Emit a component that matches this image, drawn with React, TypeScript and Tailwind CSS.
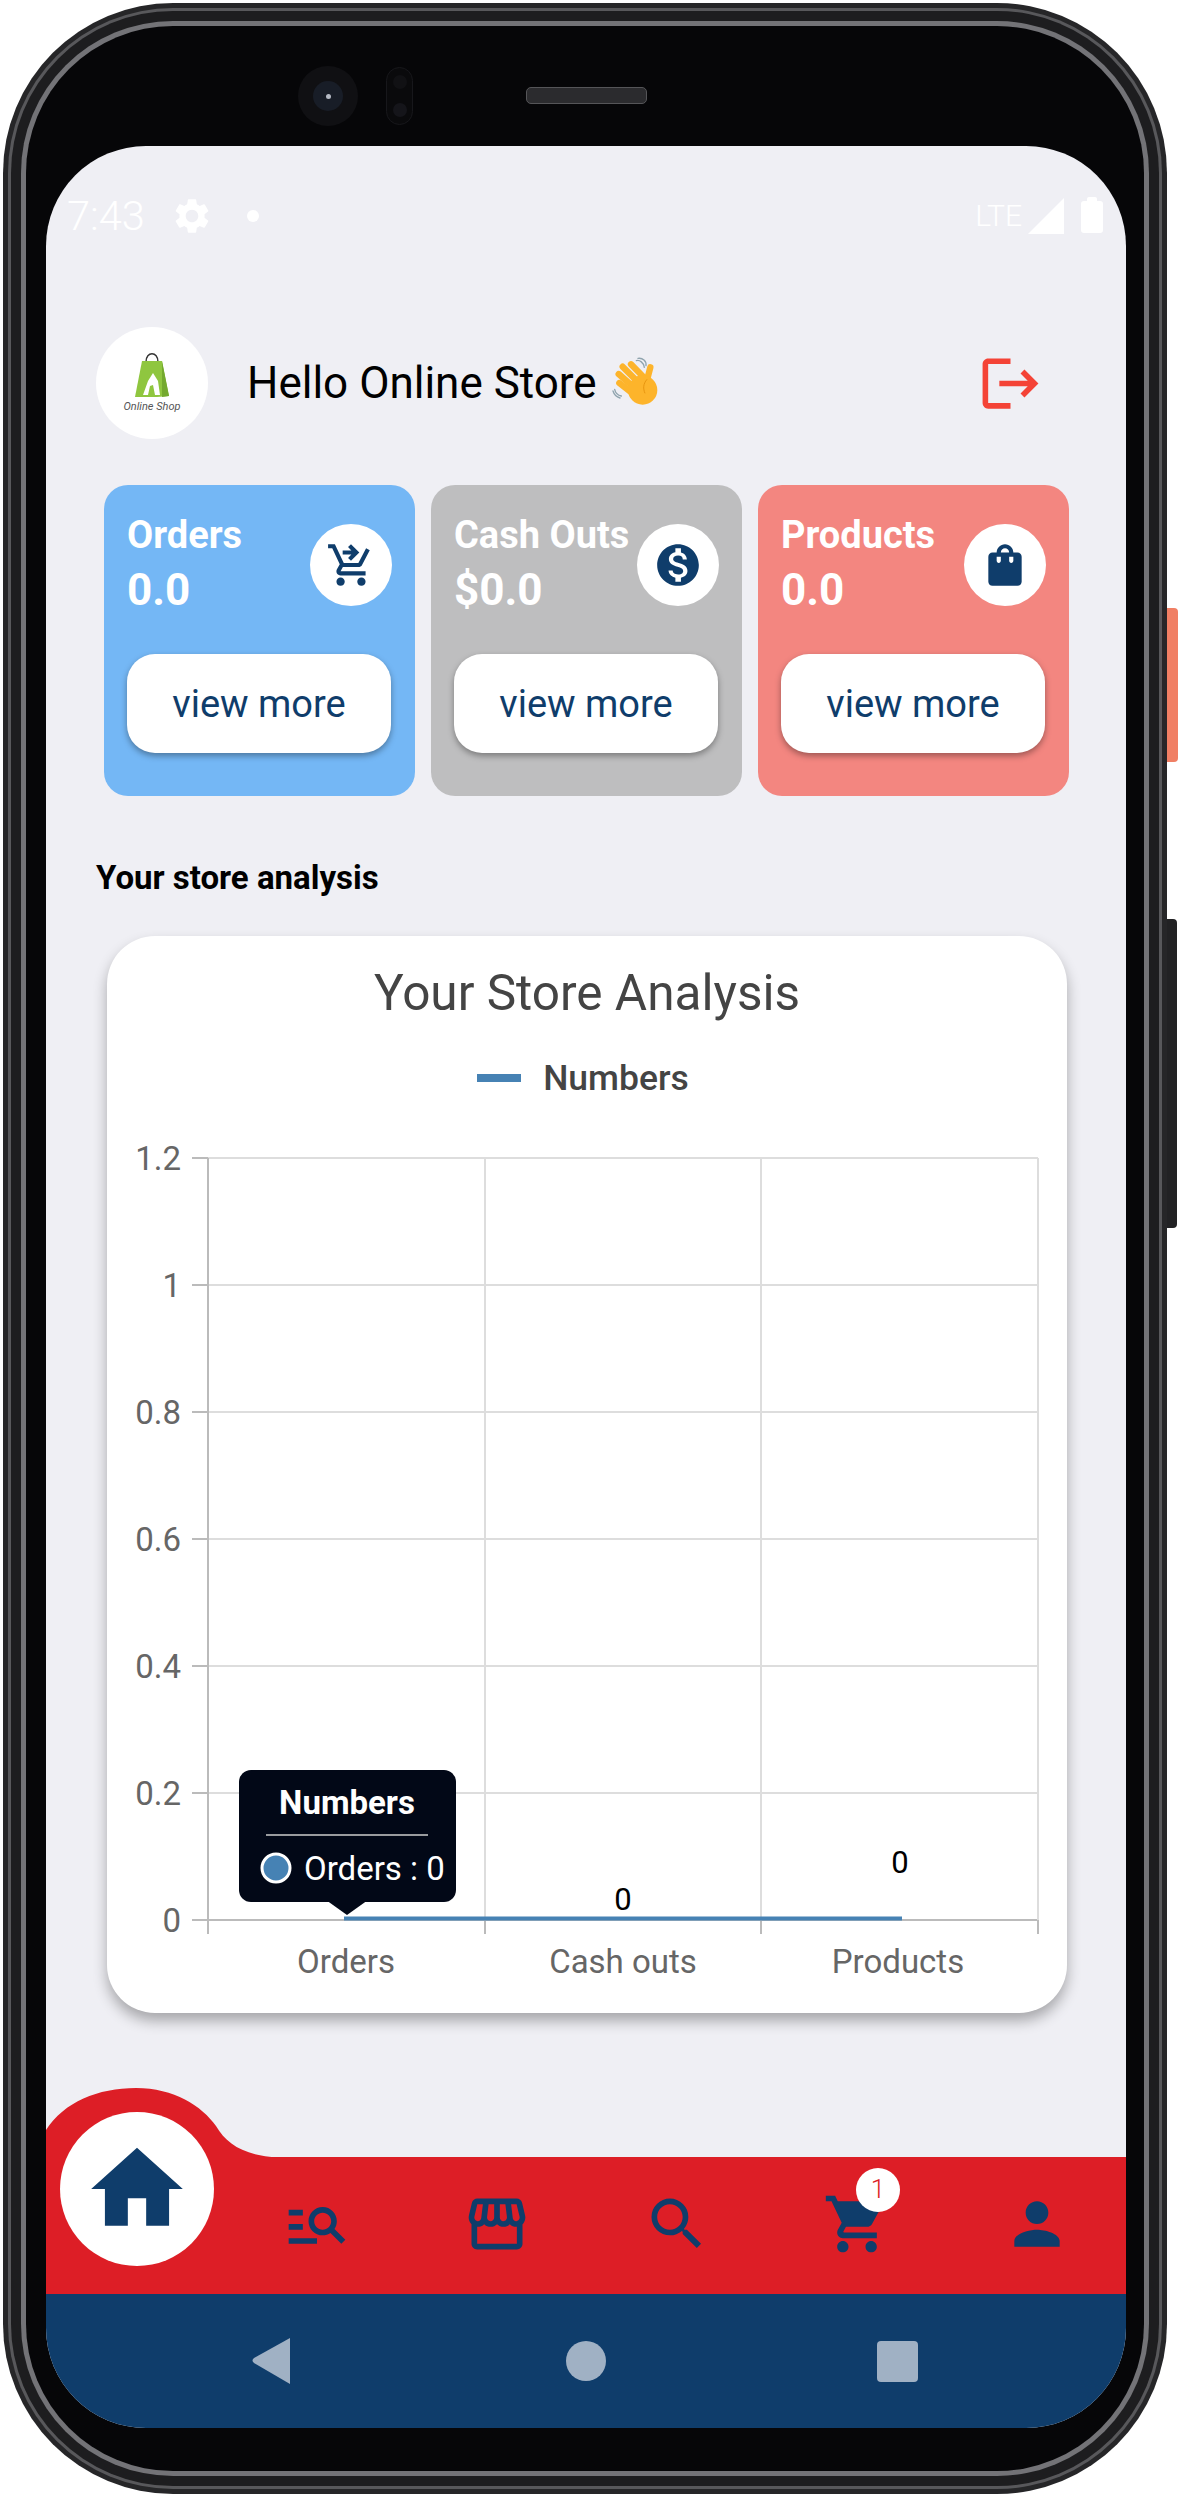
import type { ReactNode } from "react";
import { MdHome, MdLogout, MdManageSearch, MdMonetizationOn, MdOutlineStorefront, MdPerson, MdSearch, MdSettings, MdShoppingBag, MdShoppingCart, MdShoppingCartCheckout } from "react-icons/md";

const navy = "#0f3d6b";

function Frame({ children }: { children: ReactNode }) {
  return (
    <div className="relative h-[2498px] w-[1178px] overflow-hidden bg-white pl-[3px] pt-[3px]" style={{ fontFamily: "Roboto, sans-serif" }}>
      <div className="absolute right-0 top-[608px] h-[154px] w-[14px] rounded-r-[4px] bg-[#f07f64]" />
      <div className="absolute right-[1px] top-[919px] h-[309px] w-[14px] rounded-r-[4px] bg-[#222224]" />
      <div className="relative h-[2491px] w-[1164px] rounded-[170px] bg-[#262628] p-[5px]">
        <div className="h-full w-full rounded-[165px] bg-[#58585b] p-[3px]">
          <div className="h-full w-full rounded-[162px] bg-[#1d1d1f] p-[10px]">
            <div className="h-full w-full rounded-[152px] bg-[#737377] p-[5px]">
              <div className="flex h-full w-full flex-col rounded-[147px] bg-[#060608] pl-[20px] pr-[18px]">{children}</div>
            </div>
          </div>
        </div>
      </div>
    </div>
  );
}

function TopBezel() {
  return (
    <div className="flex h-[120px] shrink-0 items-center pl-[252px] pt-[20px]">
      <div className="flex h-[60px] w-[60px] items-center justify-center rounded-full bg-[#101013]">
        <div className="flex h-[30px] w-[30px] items-center justify-center rounded-full bg-[#181d27]">
          <div className="h-[5px] w-[5px] rounded-full bg-[#b5bac4]" />
        </div>
      </div>
      <div className="ml-[28px] flex h-[58px] w-[27px] flex-col items-center justify-around rounded-full border border-[#17171b] bg-[#0a0a0c]">
        <div className="h-[14px] w-[14px] rounded-full bg-[#111114]" />
        <div className="h-[14px] w-[14px] rounded-full bg-[#15151a]" />
      </div>
      <div className="mt-[-2px] ml-[113px] h-[17px] w-[121px] rounded-[5px] border border-[#555558] bg-[#2b2b2e]" />
    </div>
  );
}

function Emoji() {
  return (
    <svg width="70" height="80" viewBox="0 0 210 240" className="ml-[5px] mt-[-6px]">
      <g fill="none" stroke="#fdb42b" strokeWidth="19" strokeLinecap="round">
        <path d="M87 73 128 115" />
        <path d="M62 80 110 128" />
        <path d="M50 102 100 146" />
        <path d="M52 129 95 163" />
        <path d="M145 82 133 128" />
      </g>
      <ellipse cx="122" cy="150" rx="44" ry="44" fill="#fdb42b" />
      <path d="M135 118c-12 14-12 28-6 42" fill="none" stroke="#e8960f" strokeWidth="3" />
      <g fill="none" stroke="#90a4ae" strokeWidth="4" strokeLinecap="round">
        <path d="M103 62c10-3 22 6 24 20" />
        <path d="M108 55c14-2 26 8 24 22" />
        <path d="M38 148c2 10 10 18 20 20" />
        <path d="M33 153c3 10 11 18 21 21" />
      </g>
    </svg>
  );
}

function Logo() {
  return (
    <div className="flex h-[112px] w-[112px] shrink-0 flex-col items-center justify-center rounded-full bg-white">
      <svg width="34" height="44" viewBox="0 0 34 44">
        <path d="M11 9c0-11 12-11 12 0" fill="none" stroke="#333" strokeWidth="1.4" />
        <path d="M7 8h20l7 35-12 1H0z" fill="#8fc63f" />
        <path d="M27 8l7 35-7 1z" fill="#74a92f" />
        <path d="M8 42l5-14 5-8 5 8 2 14h-5l-2-10-3 1-2 9z" fill="#fff" />
      </svg>
      <span className="mt-[3px] text-[11px] italic leading-[14px] text-[#555]">Online Shop</span>
    </div>
  );
}

function StatCard({ title, value, bg, icon }: { title: string; value: string; bg: string; icon: ReactNode }) {
  return (
    <div className={`flex h-[311px] w-[311px] flex-col rounded-[24px] px-[23px] pt-[24px] ${bg}`}>
      <div className="flex h-[145px] items-start justify-between">
        <div className="whitespace-nowrap pt-[4px] font-bold text-white">
          <div className="text-[38px] leading-[44px]">{title}</div>
          <div className="mt-[7px] text-[44px] leading-[52px]">{value}</div>
        </div>
        <div className="mt-[15px] flex h-[82px] w-[82px] shrink-0 items-center justify-center rounded-full bg-white">{icon}</div>
      </div>
      <div className="flex h-[99px] w-[264px] items-center justify-center rounded-[28px] bg-white pt-[2px] text-[38px] text-[#0f3d6b] shadow-[0_3px_6px_rgba(0,0,0,0.35)]">view more</div>
    </div>
  );
}

function Chart() {
  const ys = ["1.2", "1", "0.8", "0.6", "0.4", "0.2", "0"];
  const vx = [208, 485, 761, 1038];
  return (
    <svg width="1178" height="1100" viewBox="0 936 1178 1100" className="ml-[-107px] block" fontFamily="Roboto, sans-serif">
      {ys.map((l, i) => {
        const y = 1158 + i * 127;
        return (
          <g key={l}>
            <line x1={i === 6 ? 192 : 208} x2="1038" y1={y} y2={y} stroke={i === 6 ? "#bbb" : "#ddd"} strokeWidth="2" />
            <line x1="192" x2="208" y1={y} y2={y} stroke="#bbb" strokeWidth="2" />
            <text x="181" y={y + 12} textAnchor="end" fontSize="33" fill="#666">{l}</text>
          </g>
        );
      })}
      {vx.map((x, i) => (
        <g key={x}>
          <line x1={x} x2={x} y1="1158" y2="1920" stroke={i === 0 ? "#bbb" : "#ddd"} strokeWidth="2" />
          <line x1={x} x2={x} y1="1920" y2="1934" stroke="#bbb" strokeWidth="2" />
        </g>
      ))}
      <line x1="344" x2="902" y1="1918.500" y2="1918.500" stroke="#4682b4" strokeWidth="4" />
      <text x="623" y="1910" textAnchor="middle" fontSize="31" fill="#000">0</text>
      <text x="900" y="1873" textAnchor="middle" fontSize="31" fill="#000">0</text>
      <text x="346" y="1973" textAnchor="middle" fontSize="33" fill="#666">Orders</text>
      <text x="623" y="1973" textAnchor="middle" fontSize="33" fill="#666">Cash outs</text>
      <text x="898" y="1973" textAnchor="middle" fontSize="33" fill="#666">Products</text>
      <path d="M326 1900h42l-21 15z" fill="#020817" />
      <rect x="239" y="1770" width="217" height="132" rx="12" fill="#020817" />
      <text x="347" y="1814" textAnchor="middle" fontSize="33" fontWeight="700" fill="#fff">Numbers</text>
      <line x1="266" x2="428" y1="1835" y2="1835" stroke="#ccc" strokeWidth="1.500" />
      <circle cx="276" cy="1868" r="14" fill="#4682b4" stroke="#fff" strokeWidth="3" />
      <text x="304" y="1880" fontSize="33" fill="#fff">Orders : 0</text>
    </svg>
  );
}

function Nav() {
  return (
    <div className="relative mt-auto h-[137px] shrink-0 bg-[#dd1e26]">
      <svg width="250" height="70" viewBox="0 0 250 70" className="absolute left-0 top-[-69px]">
        <path d="M0 42C18 14 52 0 90 0C128 0 156 18 170 38C182 58 200 69 242 70H0z" fill="#dd1e26" />
      </svg>
      <div className="absolute left-[14px] top-[-45px] flex h-[154px] w-[154px] items-center justify-center rounded-full bg-white">
        <MdHome size={110} color={navy} />
      </div>
      <div className="flex h-full items-center gap-[112px] pb-[4px] pl-[237px]">
        <MdManageSearch size={68} color={navy} />
        <MdOutlineStorefront size={68} color={navy} />
        <MdSearch size={68} color={navy} />
        <div className="relative h-[68px] w-[68px]">
          <MdShoppingCart size={68} color={navy} />
          <div className="absolute left-[33px] top-[-22px] flex h-[44px] w-[44px] items-center justify-center rounded-full bg-white text-[26px] font-light text-[#dd1e26]">1</div>
        </div>
        <MdPerson size={68} color={navy} />
      </div>
    </div>
  );
}

function SystemBar() {
  return (
    <div className="flex h-[134px] shrink-0 items-center bg-[#0f3d6b] pl-[206px]">
      <svg width="38" height="46" viewBox="0 0 38 46"><path d="M38 0v46L2 25c-2-2-2-3 0-5z" fill="#a0b1c4" /></svg>
      <div className="ml-[276px] h-[40px] w-[40px] rounded-full bg-[#a0b1c4]" />
      <div className="ml-[271px] h-[41px] w-[41px] rounded-[4px] bg-[#a0b1c4]" />
    </div>
  );
}

function StatusBar() {
  return (
    <div className="flex h-[135px] shrink-0 items-center pl-[21px] pr-[23px] pt-[4px] text-white">
      <span className="text-[41.500px] font-light leading-none">7:43</span>
      <MdSettings size={42} color="#fff" className="ml-[26px]" />
      <div className="ml-[34px] h-[12px] w-[12px] rounded-full bg-white" />
      <span className="ml-auto text-[30px] font-light leading-none">LTE</span>
      <svg width="36" height="36" viewBox="0 0 36 36" fill="#fff" className="ml-[6px]"><path d="M36 0v36H0z" /></svg>
      <div className="relative ml-[17px] mt-[2px] h-[32px] w-[22px] rounded-[3px] bg-white">
        <div className="absolute left-[6px] top-[-4px] h-[5px] w-[10px] rounded-t-[2px] bg-white" />
      </div>
    </div>
  );
}

export default function App() {
  return (
    <Frame>
      <TopBezel />
      <div className="flex h-[2282px] w-[1080px] shrink-0 flex-col overflow-hidden rounded-[100px] bg-[#efeff4]">
        <StatusBar />
        <div className="mt-[46px] flex h-[112px] items-center pl-[50px] pr-[82px]">
          <Logo />
          <span className="ml-[39px] text-[44px] leading-[52px] text-black">Hello Online Store</span>
          <Emoji />
          <div className="ml-auto"><MdLogout size={67} color="#f44336" /></div>
        </div>
        <div className="mt-[46px] flex gap-[16px] pl-[58px]">
          <StatCard title="Orders" value="0.0" bg="bg-[#74b7f5]" icon={<MdShoppingCartCheckout size={50} color={navy} />} />
          <StatCard title="Cash Outs" value="$0.0" bg="bg-[#bebebf]" icon={<MdMonetizationOn size={50} color={navy} />} />
          <StatCard title="Products" value="0.0" bg="bg-[#f38680]" icon={<MdShoppingBag size={50} color={navy} />} />
        </div>
        <div className="ml-[50px] mt-[62px] text-[33px] font-bold leading-[40px] text-black">Your store analysis</div>
        <div className="relative ml-[61px] mt-[38px] h-[1077px] w-[960px] rounded-[48px] bg-white shadow-[0_8px_14px_rgba(0,0,0,0.3)]">
          <div className="pt-[27px] text-center text-[49.500px] leading-[60px] text-[#444]">Your Store Analysis</div>
          <div className="mt-[34px] flex items-center justify-center pr-[8px]">
            <div className="h-[8px] w-[44px] bg-[#4682b4]" />
            <span className="ml-[22px] text-[35.500px] font-medium leading-[42px] text-[#444]">Numbers</span>
          </div>
          <div className="absolute left-0 top-0 h-[1077px] w-[960px] overflow-hidden">
            <Chart />
          </div>
        </div>
        <Nav />
        <SystemBar />
      </div>
    </Frame>
  );
}
